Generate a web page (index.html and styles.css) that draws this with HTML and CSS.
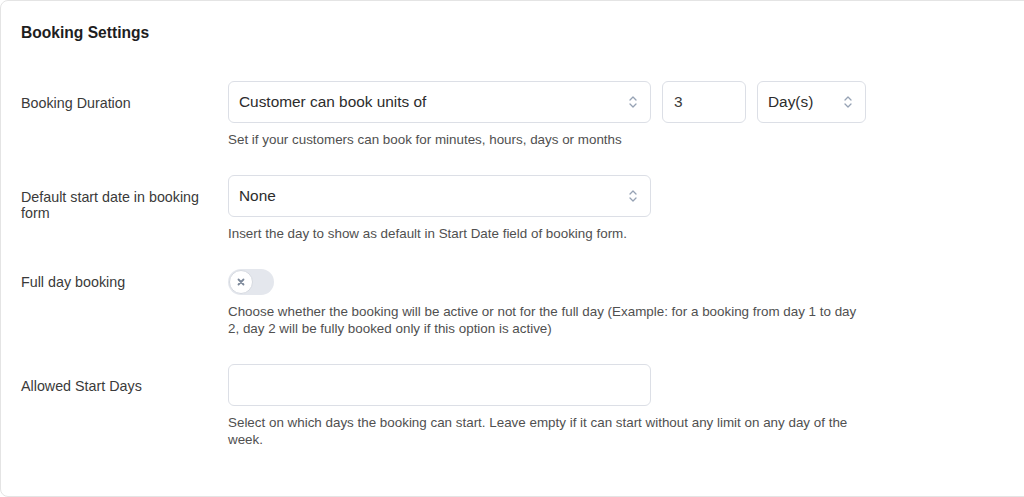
FILE: index.html
```html
<!DOCTYPE html>
<html lang="en">
<head>
	<meta charset="UTF-8">
	<title>Booking Settings</title>
	<link rel="stylesheet" href="styles.css">
</head>
<body>
	<div class="card">
		<h2 class="title">Booking Settings</h2>

		<div class="row">
			<div class="label">Booking Duration</div>
			<div class="field">
				<div class="inline">
					<div class="select wide">
						<span>Customer can book units of</span>
						<svg class="chev" viewBox="0 0 10 16" width="10" height="16"><path d="M2 6 L5 3 L8 6 M2 10 L5 13 L8 10"/></svg>
					</div>
					<div class="input num">3</div>
					<div class="select unit">
						<span>Day(s)</span>
						<svg class="chev" viewBox="0 0 10 16" width="10" height="16"><path d="M2 6 L5 3 L8 6 M2 10 L5 13 L8 10"/></svg>
					</div>
				</div>
				<p class="help">Set if your customers can book for minutes, hours, days or months</p>
			</div>
		</div>

		<div class="row">
			<div class="label">Default start date in booking form</div>
			<div class="field">
				<div class="select wide">
					<span>None</span>
					<svg class="chev" viewBox="0 0 10 16" width="10" height="16"><path d="M2 6 L5 3 L8 6 M2 10 L5 13 L8 10"/></svg>
				</div>
				<p class="help">Insert the day to show as default in Start Date field of booking form.</p>
			</div>
		</div>

		<div class="row">
			<div class="label label-toggle">Full day booking</div>
			<div class="field">
				<div class="toggle">
					<div class="knob">
						<svg viewBox="0 0 10 10" width="10" height="10"><path d="M2.5 2.5 L7.5 7.5 M7.5 2.5 L2.5 7.5"/></svg>
					</div>
				</div>
				<p class="help">Choose whether the booking will be active or not for the full day (Example: for a booking from day 1 to day 2, day 2 will be fully booked only if this option is active)</p>
			</div>
		</div>

		<div class="row">
			<div class="label">Allowed Start Days</div>
			<div class="field">
				<div class="input wide"></div>
				<p class="help">Select on which days the booking can start. Leave empty if it can start without any limit on any day of the week.</p>
			</div>
		</div>
	</div>
</body>
</html>
```

FILE: styles.css
```css
*{
	padding:0;
	margin:0;
	box-sizing: border-box;
}
html, body{
	background: #fff;
	overflow: hidden;
}
body{
	font-family: "Liberation Sans", Arial, sans-serif;
	color: #2c2c2c;
	width: 1024px;
	height: 497px;
}
.card{
	width: 1040px;
	height: 497px;
	border: 1px solid #e4e4e4;
	border-radius: 8px;
	padding: 22px 0 0 20px;
}
.title{
	font-size: 15.6px;
	line-height: 20px;
	font-weight: bold;
	color: #1e1e1e;
	margin-bottom: 38px;
}
.row{
	display: flex;
	margin-bottom: 27px;
}
.label{
	width: 207px;
	flex: none;
	padding: 14px 20px 0 0;
	font-size: 14.3px;
	line-height: 16px;
	color: #3a3a3a;
}
.label-toggle{
	padding-top: 5px;
}
.field{
	width: 640px;
}
.inline{
	display: flex;
	gap: 11px;
}
.select, .input{
	height: 42px;
	border: 1px solid #dcdfe6;
	border-radius: 6px;
	display: flex;
	align-items: center;
	justify-content: space-between;
	padding: 0 12px 0 10px;
	font-size: 15.4px;
	color: #2c2c2c;
}
.wide{
	width: 423px;
}
.num{
	width: 84px;
	padding-left: 11px;
	color: #3a3a3a;
}
.unit{
	width: 109px;
}
.chev{
	fill: none;
	stroke: #96a2b4;
	stroke-width: 1.3;
	stroke-linecap: round;
	stroke-linejoin: round;
}
.help{
	margin-top: 8px;
	font-size: 13.4px;
	line-height: 17px;
	color: #505050;
}
.toggle{
	width: 46px;
	height: 26px;
	border-radius: 13px;
	background: #e4e7ed;
	padding: 1px;
}
.knob{
	width: 24px;
	height: 24px;
	border-radius: 50%;
	background: #fff;
	border: 1px solid #d5d9e0;
	display: flex;
	align-items: center;
	justify-content: center;
}
.knob svg{
	fill: none;
	stroke: #7c889a;
	stroke-width: 1.8;
	stroke-linecap: round;
}
```
